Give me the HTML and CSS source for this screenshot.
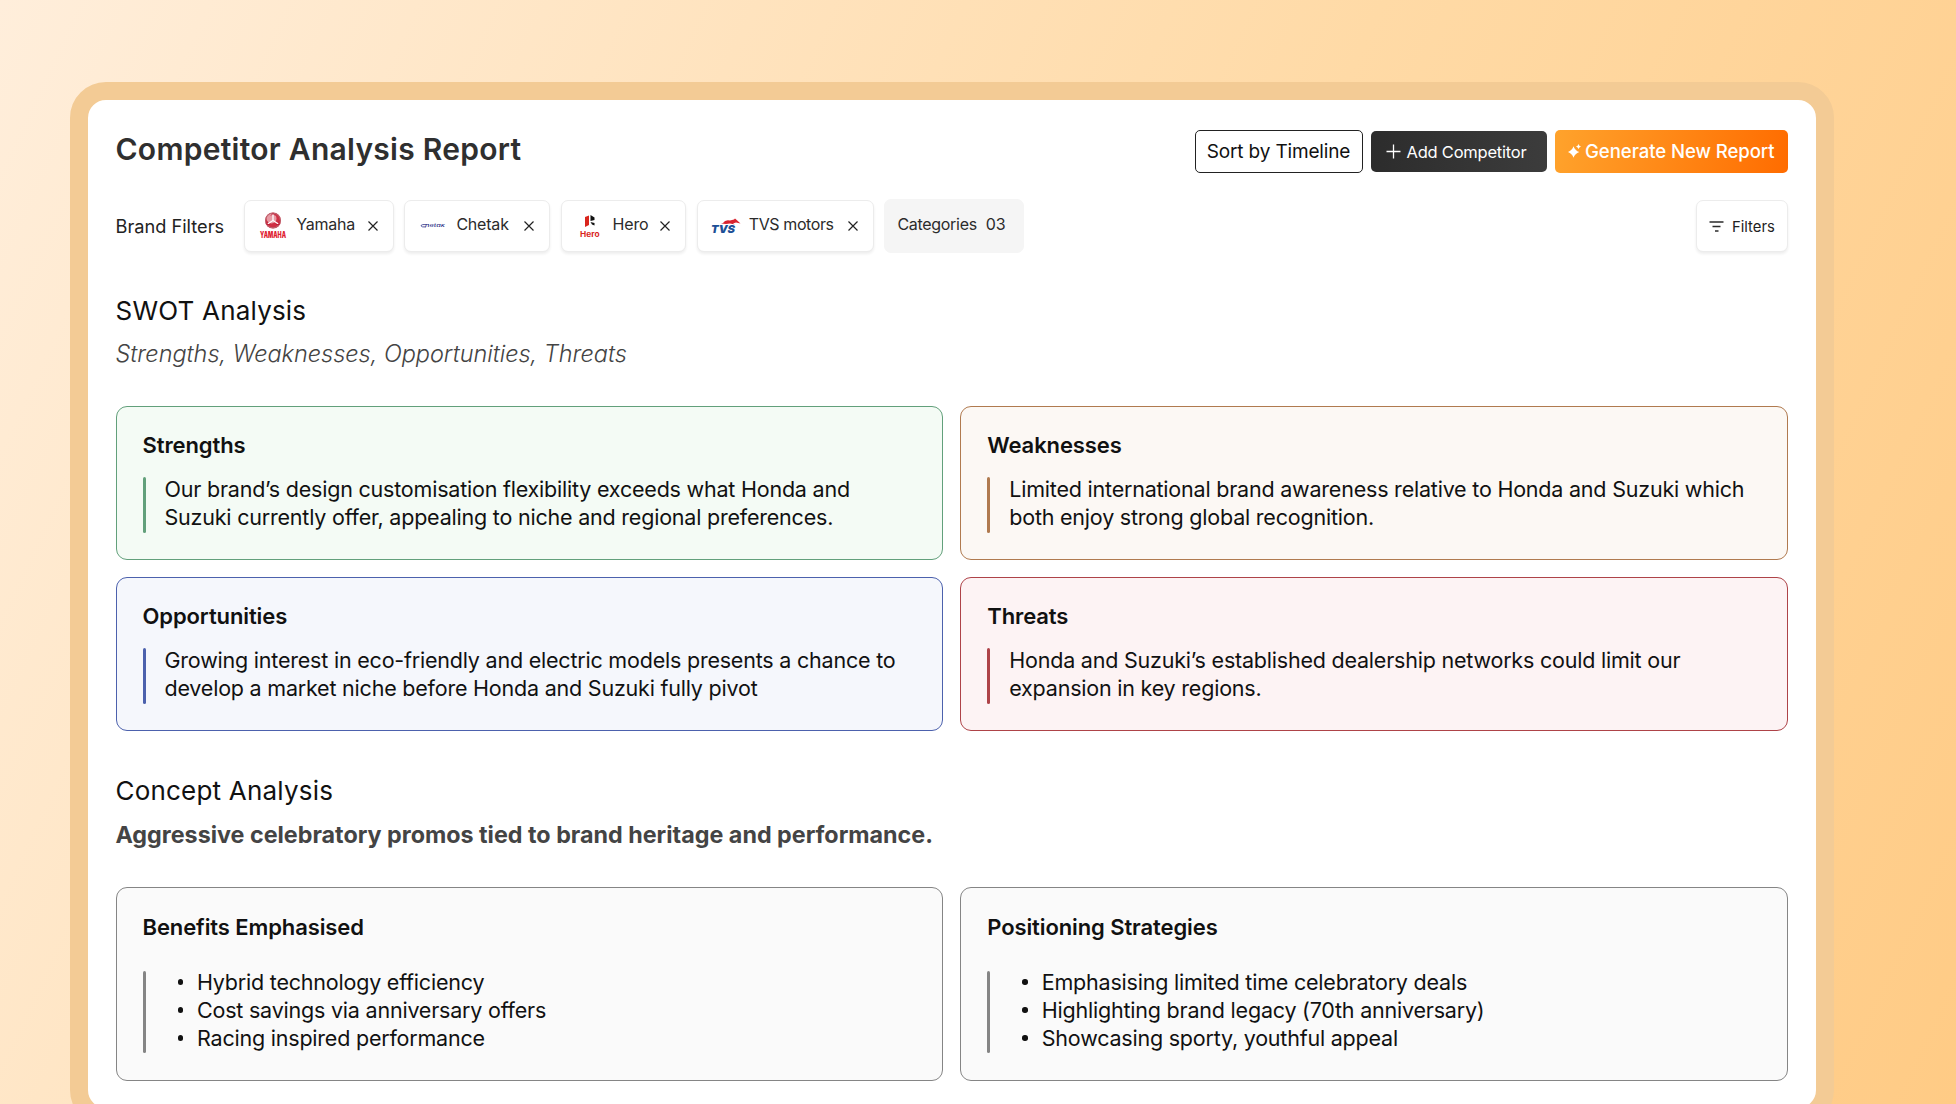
FILE: index.html
```
<!doctype html>

<html lang="en">
<head>
  <meta charset="utf-8">

  <title>Competitor Analysis Report</title>
  <link rel="stylesheet" href="styles.css">
</head>

<body>
    <div class="panel">
        <div class="header">
            <h1>Competitor Analysis Report</h1>
            <div class="actions">
                <button class="btn sort">Sort by Timeline</button>
                <button class="btn add">
                    <svg width="15" height="15" viewBox="0 0 15 15"><path d="M7.5 0.5V14.5M0.5 7.5H14.5" stroke="#fff" stroke-width="1.3"/></svg>
                    <span>Add Competitor</span>
                </button>
                <button class="btn generate">
                    <svg width="13" height="14" viewBox="0 0 13 14" fill="#fff"><path d="M5.5 2.2Q7 6.500 11.300 8Q7 9.500 5.500 13.800Q4 9.500 -0.300 8Q4 6.500 5.500 2.200Z"/><path d="M10.500 0Q11 2 13 2.500Q11 3 10.500 5Q10 3 8 2.500Q10 2 10.500 0Z"/></svg>
                    <span>Generate New Report</span>
                </button>
            </div>
        </div>

        <div class="filters">
            <span class="filtersLabel">Brand Filters</span>
            <div class="chip yamaha">
                <svg class="logo" width="30" height="30" viewBox="0 0 30 30">
                    <circle cx="15" cy="9.500" r="8" fill="#cf3045"/>
                    <circle cx="13.500" cy="7.500" r="5" fill="#e79aa4"/>
                    <circle cx="15" cy="9.500" r="7.400" fill="none" stroke="#b96a74" stroke-width="1"/>
                    <path d="M15 9.500V3M15 9.500L9.500 13M15 9.500L20.500 13" stroke="#fff" stroke-width="1.300"/>
                    <path d="M13 4.500L15 2.500L17 4.500M9 10.500V13.500H12M21 10.500V13.500H18" fill="none" stroke="#c01f38" stroke-width="1"/>
                    <text x="2" y="26.800" font-size="8.400" font-weight="900" fill="#e0202f" textLength="26" lengthAdjust="spacingAndGlyphs">YAMAHA</text>
                </svg>
                <span>Yamaha</span>
                <svg class="close" width="10" height="10" viewBox="0 0 10 10"><path d="M0.500 0.500L9.500 9.500M9.500 0.500L0.500 9.500"/></svg>
            </div>
            <div class="chip chetak">
                <svg class="logo" width="30" height="30" viewBox="0 0 30 30">
                    <text x="7" y="16.300" font-size="4" font-style="italic" font-weight="500" fill="#2b2f86" textLength="20" lengthAdjust="spacingAndGlyphs">hetak</text>
                    <path d="M8.500 13.600Q3 13.200 3 14.800Q3.500 16.300 8 16" fill="none" stroke="#2b2f86" stroke-width="0.800"/>
                </svg>
                <span>Chetak</span>
                <svg class="close" width="10" height="10" viewBox="0 0 10 10"><path d="M0.500 0.500L9.500 9.500M9.500 0.500L0.500 9.500"/></svg>
            </div>
            <div class="chip hero">
                <svg class="logo" width="30" height="30" viewBox="0 0 30 30">
                    <path d="M10 6L14 4.500V14L10 16Z" fill="#d9251d"/>
                    <path d="M15.500 4L19.500 6.500V9L15.500 10Z" fill="#111"/>
                    <path d="M15.500 11L19.500 12V14.500L17 13.500Z" fill="#111"/>
                    <text x="5" y="25.500" font-size="7.500" font-weight="700" fill="#d9251d" textLength="19.500" lengthAdjust="spacingAndGlyphs">Hero</text>
                </svg>
                <span>Hero</span>
                <svg class="close" width="10" height="10" viewBox="0 0 10 10"><path d="M0.500 0.500L9.500 9.500M9.500 0.500L0.500 9.500"/></svg>
            </div>
            <div class="chip tvs">
                <svg class="logo" width="30" height="30" viewBox="0 0 30 30">
                    <path d="M12 12Q14 8.500 19 9.500L23 8.500L24 7.500L26 9.200L29.500 12.500L25 11.500L22 12.500L24 13.500L19 12.500L15 13L10 12.500Z" fill="#d8232f"/>
                    <text x="0" y="21.600" font-size="11" font-style="italic" font-weight="900" fill="#1c4f96" textLength="24" lengthAdjust="spacingAndGlyphs">TVS</text>
                </svg>
                <span>TVS motors</span>
                <svg class="close" width="10" height="10" viewBox="0 0 10 10"><path d="M0.500 0.500L9.500 9.500M9.500 0.500L0.500 9.500"/></svg>
            </div>
            <div class="chip categories">
                <span>Categories</span>
                <span>03</span>
            </div>
            <button class="filterBtn">
                <svg width="15" height="11" viewBox="0 0 15 11"><path d="M0.500 1H14.500M3.500 5.500H11.500M6 10H9.500" stroke="#2b2b2b" stroke-width="1.400"/></svg>
                <span>Filters</span>
            </button>
        </div>

        <h2>SWOT Analysis</h2>
        <p class="subtitle">Strengths, Weaknesses, Opportunities, Threats</p>
        <div class="grid">
            <div class="card green">
                <h3>Strengths</h3>
                <div class="quote">
                    <p>Our brand’s design customisation flexibility exceeds what Honda and<br>Suzuki currently offer, appealing to niche and regional preferences.</p>
                </div>
            </div>
            <div class="card orange">
                <h3>Weaknesses</h3>
                <div class="quote">
                    <p>Limited international brand awareness relative to Honda and Suzuki which<br>both enjoy strong global recognition.</p>
                </div>
            </div>
            <div class="card blue">
                <h3>Opportunities</h3>
                <div class="quote">
                    <p>Growing interest in eco-friendly and electric models presents a chance to<br>develop a market niche before Honda and Suzuki fully pivot</p>
                </div>
            </div>
            <div class="card red">
                <h3>Threats</h3>
                <div class="quote">
                    <p>Honda and Suzuki’s established dealership networks could limit our<br>expansion in key regions.</p>
                </div>
            </div>
        </div>

        <h2 class="concept">Concept Analysis</h2>
        <p class="promo">Aggressive celebratory promos tied to brand heritage and performance.</p>
        <div class="grid">
            <div class="card gray">
                <h3>Benefits Emphasised</h3>
                <div class="quote">
                    <ul>
                        <li>Hybrid technology efficiency</li>
                        <li>Cost savings via anniversary offers</li>
                        <li>Racing inspired performance</li>
                    </ul>
                </div>
            </div>
            <div class="card gray">
                <h3>Positioning Strategies</h3>
                <div class="quote">
                    <ul>
                        <li>Emphasising limited time celebratory deals</li>
                        <li>Highlighting brand legacy (70th anniversary)</li>
                        <li>Showcasing sporty, youthful appeal</li>
                    </ul>
                </div>
            </div>
        </div>
    </div>
</body>
</html>
```
FILE: styles.css
```
*{
    box-sizing: border-box;
}
body{
    margin: 0;
    height: 1104px;
    overflow: hidden;
    padding: 82px 0 0 70px;
    background: linear-gradient(115deg, #ffeedb 0%, #ffdaa6 56%, #ffcb85 100%);
    font-family: Inter, "Liberation Sans", sans-serif;
    color: #111;
}
h1, h2, h3, p, ul{
    margin: 0;
    padding: 0;
}
button{
    font-family: inherit;
}
.panel{
    width: 1764px;
    height: 1044px;
    padding: 30px 28px 0 27.5px;
    border: 18px solid #f3cb95;
    border-radius: 36px;
    background: #fff;
}

/* header */
.header{
    display: flex;
    justify-content: space-between;
    align-items: flex-start;
    height: 43px;
}
h1{
    font-size: 30px;
    font-weight: 600;
    line-height: 38px;
    letter-spacing: 0.27px;
    color: #2f2f2f;
}
.actions{
    display: flex;
    align-items: center;
    gap: 8px;
}
.btn{
    display: flex;
    align-items: center;
    justify-content: center;
    height: 43px;
    padding: 0;
    border: none;
    border-radius: 5px;
    white-space: nowrap;
}
.sort{
    width: 168px;
    border: 1px solid #222;
    background: #fff;
    color: #111;
    font-size: 19px;
    letter-spacing: -0.15px;
}
.add{
    width: 176px;
    height: 41px;
    gap: 5px;
    padding-right: 4px;
    background: linear-gradient(90deg, #2c2c2c, #3c3c3c);
    color: #fff;
    font-size: 16.5px;
    letter-spacing: -0.22px;
}
.generate{
    width: 233.5px;
    gap: 4px;
    padding-bottom: 1px;
    background: linear-gradient(100deg, #ffa32c, #ff6c00);
    color: #fff;
    font-size: 18.6px;
    font-weight: 500;
    letter-spacing: -0.08px;
}

/* brand filters */
.filters{
    display: flex;
    align-items: center;
    gap: 10.7px;
    margin-top: 27px;
    height: 52px;
}
.filtersLabel{
    width: 118px;
    padding-bottom: 1px;
    font-size: 18.2px;
    color: #222;
}
.chip{
    display: flex;
    align-items: center;
    height: 52px;
    padding: 0 15px 0 13px;
    border: 1px solid #ececec;
    border-radius: 7px;
    background: #fff;
    box-shadow: 0 2px 3px rgba(0,0,0,0.07);
    font-size: 16px;
    letter-spacing: -0.2px;
    color: #2b2b2b;
}
.chip span{
    padding-bottom: 4px;
    white-space: nowrap;
}
.logo{
    margin-right: 8px;
    overflow: visible;
    font-family: Inter, sans-serif;
    letter-spacing: 0;
}
.close{
    margin-left: auto;
    fill: none;
    stroke: #222;
    stroke-width: 1.2;
}
.yamaha{ width: 149.5px; }
.chetak{ width: 145.5px; }
.hero{ width: 125.5px; }
.tvs{
    width: 177px;
    letter-spacing: -0.4px;
}
.categories{
    width: 139.5px;
    height: 54px;
    gap: 9px;
    padding-left: 12px;
    border-color: #f5f5f5;
    background: #f5f5f5;
    box-shadow: none;
    letter-spacing: -0.3px;
}
.filterBtn{
    display: flex;
    align-items: center;
    gap: 8px;
    width: 92px;
    height: 52px;
    margin-left: auto;
    padding: 1px 0 0 12px;
    border: 1px solid #ececec;
    border-radius: 7px;
    background: #fff;
    box-shadow: 0 2px 3px rgba(0,0,0,0.07);
    font-size: 14.8px;
    color: #222;
}

/* sections */
h2{
    margin-top: 43px;
    font-size: 26px;
    font-weight: 400;
    line-height: 32px;
    letter-spacing: 0.2px;
}
.concept{
    margin-top: 44px;
}
.subtitle{
    margin: 12px 0 37px;
    font-size: 23.5px;
    font-style: italic;
    font-weight: 300;
    line-height: 30px;
    letter-spacing: -0.03px;
    color: #444;
}
.promo{
    margin: 13px 0 37px;
    font-size: 23.3px;
    font-weight: 700;
    line-height: 30px;
    color: #444;
}
.grid{
    display: grid;
    grid-template-columns: 1fr 1fr;
    gap: 17px;
}
.card{
    height: 154px;
    padding: 24px 26px 0;
    border: 1px solid var(--line);
    border-radius: 11px;
    background: var(--fill);
}
h3{
    font-size: 22px;
    font-weight: 600;
    line-height: 28px;
    letter-spacing: -0.1px;
}
.quote{
    display: flex;
    margin-top: 18px;
    font-size: 21.5px;
    line-height: 28px;
    letter-spacing: -0.21px;
}
.quote::before{
    content: "";
    width: 3px;
    margin-right: 19px;
    border-radius: 2px;
    background: var(--line);
}
.quote p{
    position: relative;
    top: -2px;
    white-space: nowrap;
}
.green{ --line: #62a07b; --fill: #f4fbf5; }
.orange{ --line: #b07a4f; --fill: #fcf8f4; }
.blue{ --line: #4c61ad; --fill: #f5f7fc; }
.red{ --line: #ae4348; --fill: #fdf3f4; }
.gray{
    --line: #858585;
    --fill: #fafafa;
    height: 194px;
    padding-top: 25px;
}
.gray .quote{
    height: 82px;
    margin-top: 30px;
}
.gray ul{
    margin-top: -3px;
    list-style: none;
}
.gray li{
    display: flex;
    align-items: center;
    padding-left: 13px;
}
.gray li::before{
    content: "";
    width: 5.5px;
    height: 5.5px;
    margin-right: 14px;
    border-radius: 50%;
    background: #111;
}
```
